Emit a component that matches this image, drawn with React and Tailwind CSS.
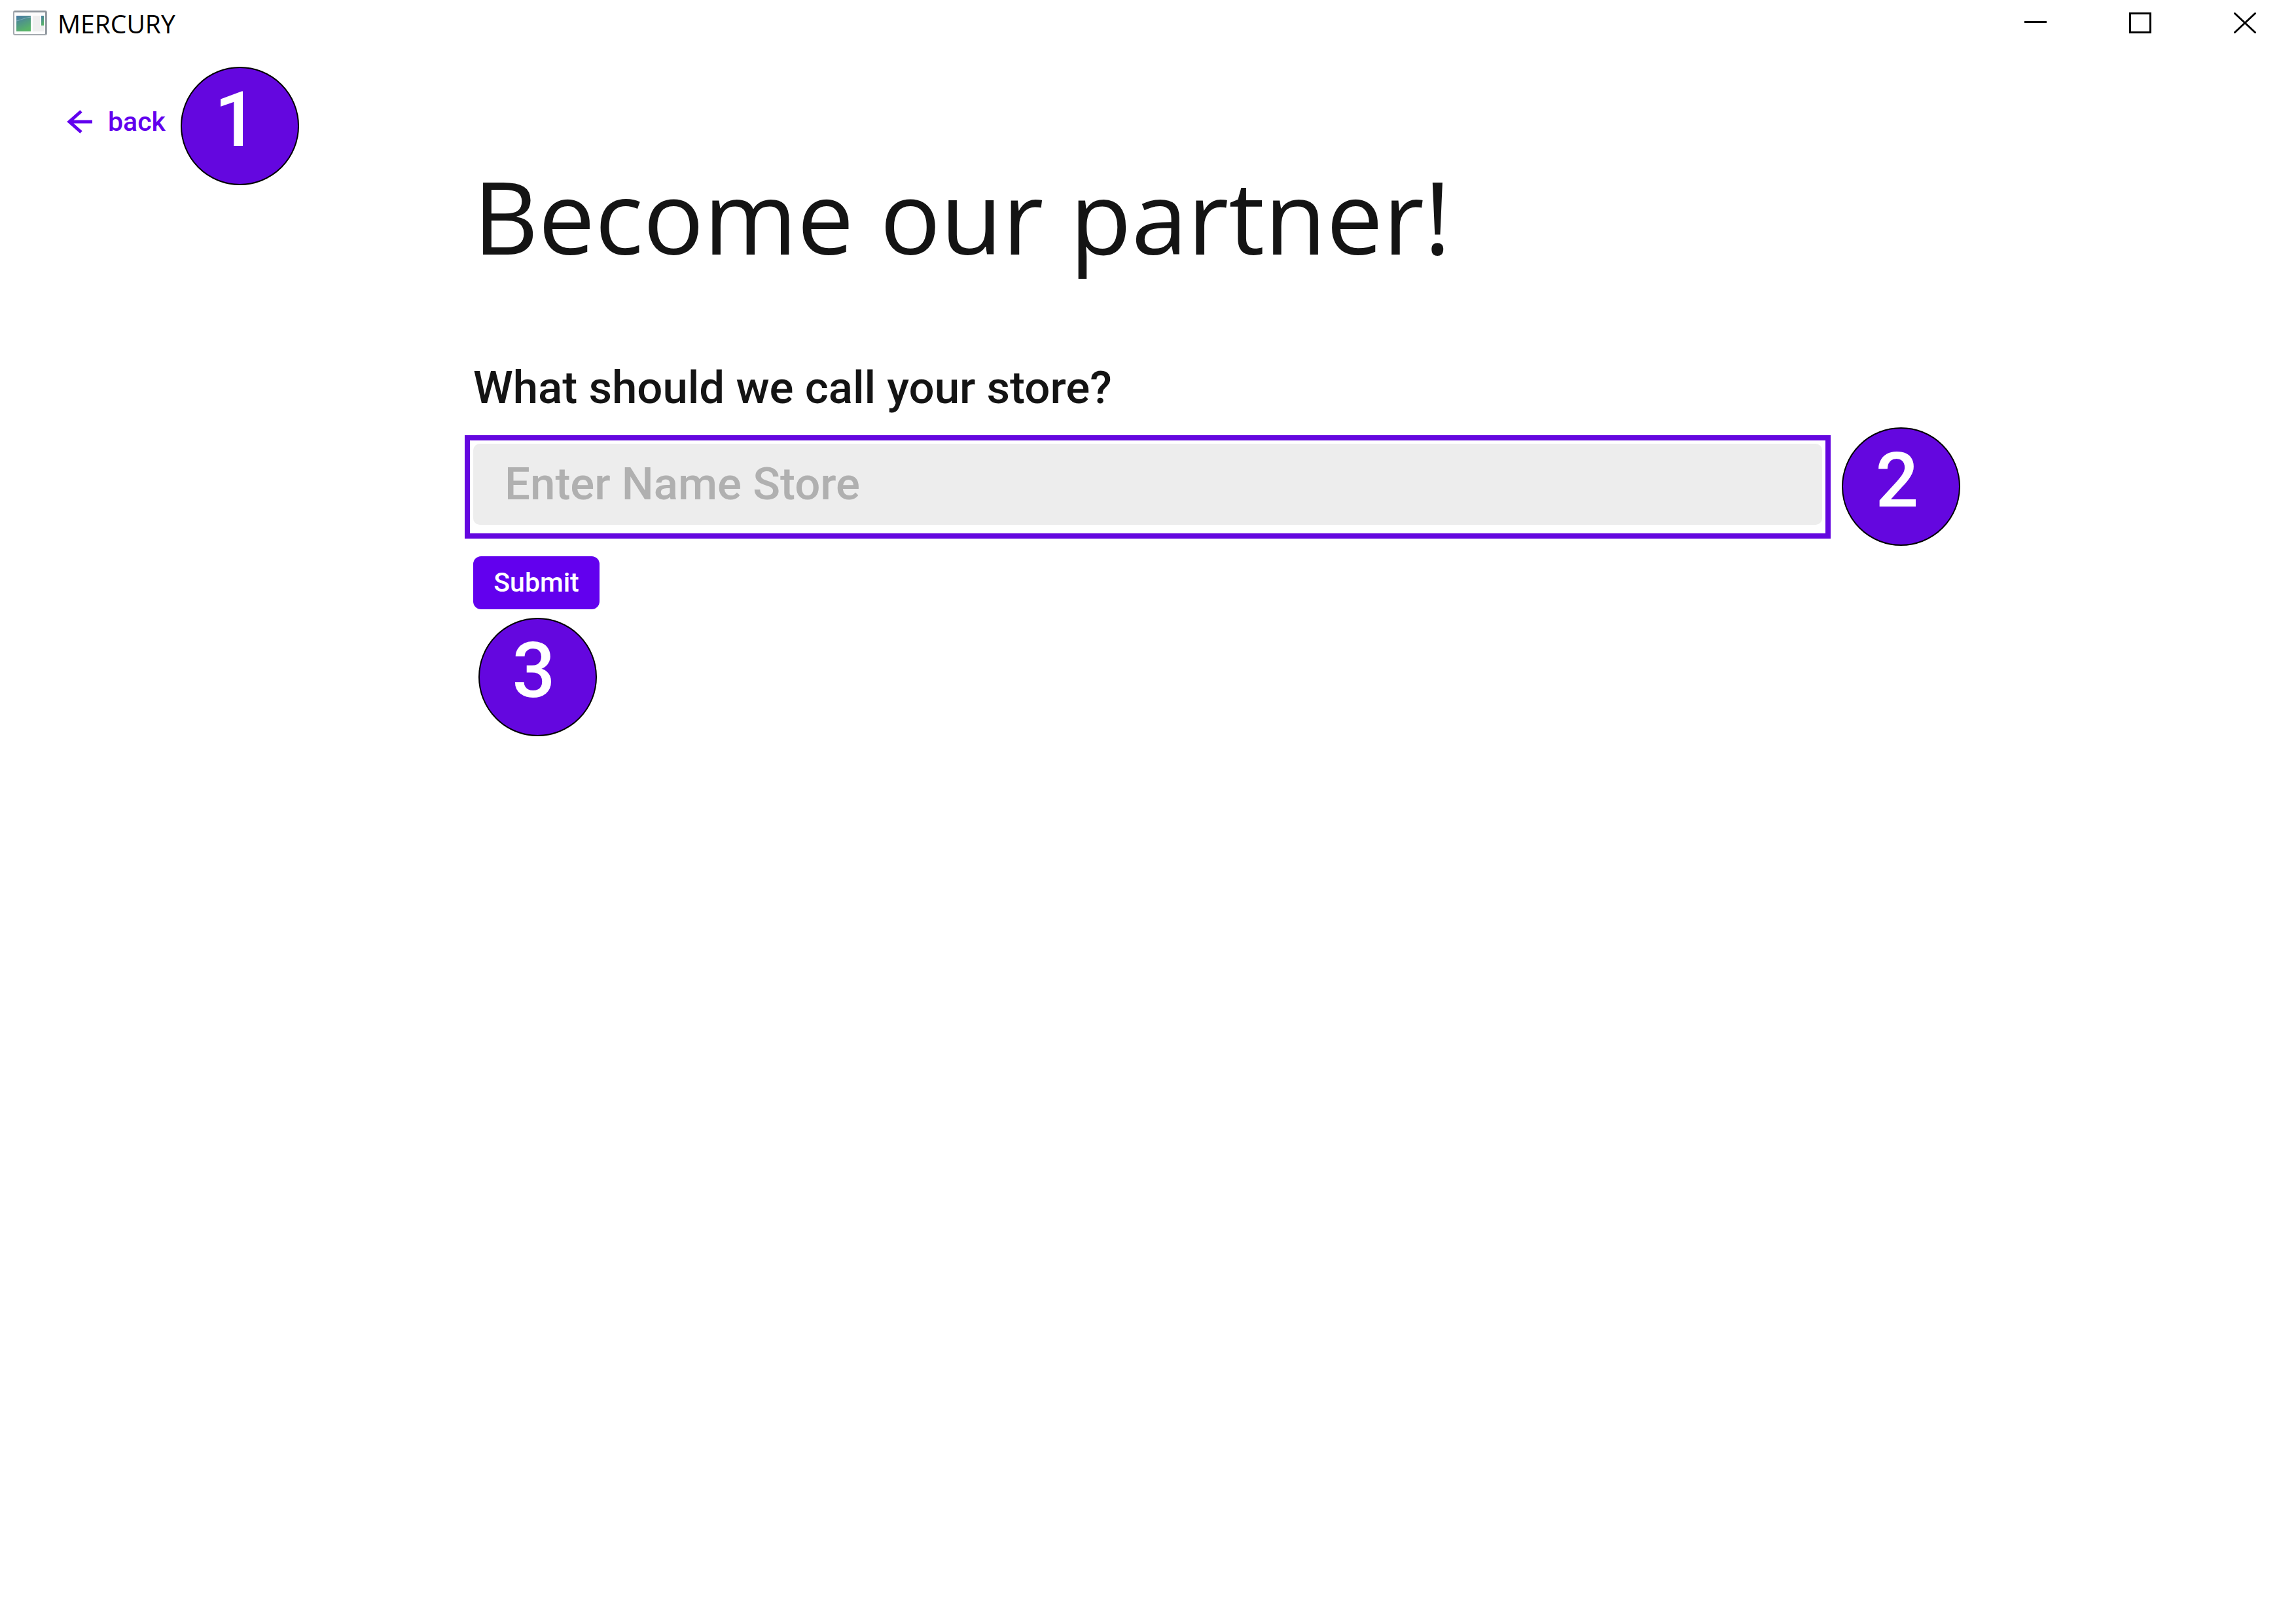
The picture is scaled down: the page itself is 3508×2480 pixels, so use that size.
function Badge({ children }) {
  return (
    <span className="flex size-[181px] shrink-0 items-center justify-center rounded-full border-2 border-black bg-[#6407df] pr-3 pb-5 font-['Roboto',sans-serif] text-[116px] leading-none font-medium text-white">
      {children}
    </span>
  );
}

function AppIcon() {
  return (
    <svg viewBox="0 0 52 38" className="h-[38px] w-[52px]" aria-hidden="true">
      <defs>
        <linearGradient id="pane" x1="0" y1="0" x2="0.4" y2="1">
          <stop offset="0" stopColor="#4779a6" />
          <stop offset="1" stopColor="#58b368" />
        </linearGradient>
      </defs>
      <rect x="1" y="1" width="50" height="36" rx="2" fill="#fdfdfd" stroke="#a3a8ae" strokeWidth="2" />
      <path d="M2 2h48" stroke="#8e959c" strokeWidth="2" />
      <path d="M50 2v34" stroke="#8e959c" strokeWidth="2" />
      <rect x="5" y="8" width="22" height="24" fill="url(#pane)" />
      <path d="M5 16c6-1 10-4 22-6" stroke="#7fa9bd" strokeWidth="1" fill="none" />
      <rect x="30" y="8" width="11" height="24" fill="#efefef" />
      <rect x="41" y="23" width="6" height="9" fill="#efefef" />
      <rect x="43" y="8" width="4" height="15" fill="url(#pane)" />
    </svg>
  );
}

export default function App() {
  return (
    <div className="min-h-screen bg-white font-['Roboto',sans-serif] text-[#141414]">
      <header className="flex h-[70px] items-center justify-between pl-5">
        <div className="flex items-center gap-4">
          <AppIcon />
          <span className="font-['Open_Sans',sans-serif] text-[39px] leading-none text-black">MERCURY</span>
        </div>
        <div className="flex gap-1">
          <button type="button" aria-label="Minimize" className="flex h-[70px] w-[156px] items-center justify-center">
            <svg viewBox="0 0 34 34" className="size-[34px]" fill="none" stroke="#000" strokeWidth="3">
              <path d="M0 15.500H34" />
            </svg>
          </button>
          <button type="button" aria-label="Maximize" className="flex h-[70px] w-[156px] items-center justify-center">
            <svg viewBox="0 0 34 34" className="size-[34px]" fill="none" stroke="#000" strokeWidth="3">
              <rect x="1.500" y="2.500" width="31" height="29" />
            </svg>
          </button>
          <button type="button" aria-label="Close" className="flex h-[70px] w-[156px] items-center justify-center">
            <svg viewBox="0 0 34 34" className="size-[34px]" fill="none" stroke="#000" strokeWidth="3" strokeLinecap="round">
              <path d="M1.500 2.500L32.500 31.500M32.500 2.500L1.500 31.500" />
            </svg>
          </button>
        </div>
      </header>

      <div className="grid grid-cols-[710px_1fr] pt-8">
        <nav className="flex items-start justify-between pr-[253px] pl-[102px]">
          <a href="#back" className="flex h-[168px] items-center gap-[23px] text-[#6200ee]">
            <svg viewBox="0 0 40 36" className="h-9 w-10" fill="none" stroke="currentColor" strokeWidth="5" aria-hidden="true">
              <path d="M39 18H4M22 2L4 18L22 34" />
            </svg>
            <span className="text-[41px] leading-none font-medium">back</span>
          </a>
          <Badge>1</Badge>
        </nav>

        <main className="pt-[139px] pr-[513px]">
          <h1 className="pl-[13px] font-['Open_Sans',sans-serif] text-[154px] leading-[176px]">Become our partner!</h1>
          <form className="mt-[136px]" onSubmit={(e) => e.preventDefault()}>
            <label htmlFor="store" className="block pl-[13px] text-[69px] leading-[80px] font-medium">
              What should we call your store?
            </label>
            <div className="mt-5 flex items-center gap-[17px]">
              <div className="flex-1 border-8 border-[#6407df] px-[5px] pt-[5px] pb-[13px]">
                <input
                  id="store"
                  type="text"
                  placeholder="Enter Name Store"
                  className="block h-[124px] w-full rounded-[10px] bg-[#ededed] px-12 text-[69px] font-medium outline-none placeholder:text-[#b0b0b0]"
                />
              </div>
              <Badge>2</Badge>
            </div>
            <div className="flex flex-col items-start gap-[13px] pt-4 pl-[13px]">
              <button type="submit" className="h-[81px] w-[193px] rounded-[12px] bg-[#6200ee] text-[41px] leading-none font-medium text-white">
                Submit
              </button>
              <div className="pl-2">
                <Badge>3</Badge>
              </div>
            </div>
          </form>
        </main>
      </div>
    </div>
  );
}
